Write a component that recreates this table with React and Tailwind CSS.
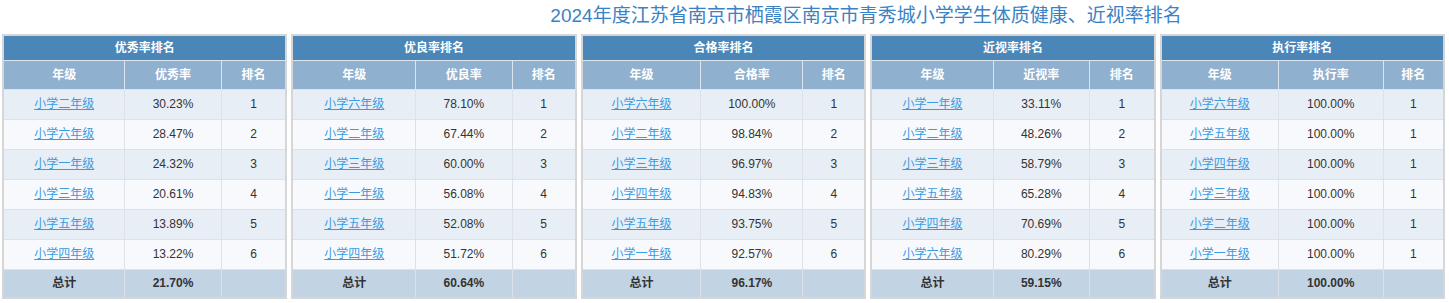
import React from "react";

const TABLES = [
    {
        title: "优秀率排名",
        col: "优秀率",
        widths: ["43%", "34%", "23%"],
        rows: [
            ["小学二年级", "30.23%", 1],
            ["小学六年级", "28.47%", 2],
            ["小学一年级", "24.32%", 3],
            ["小学三年级", "20.61%", 4],
            ["小学五年级", "13.89%", 5],
            ["小学四年级", "13.22%", 6],
        ],
        total: "21.70%",
    },
    {
        title: "优良率排名",
        col: "优良率",
        widths: ["43.5%", "34%", "22.5%"],
        rows: [
            ["小学六年级", "78.10%", 1],
            ["小学二年级", "67.44%", 2],
            ["小学三年级", "60.00%", 3],
            ["小学一年级", "56.08%", 4],
            ["小学五年级", "52.08%", 5],
            ["小学四年级", "51.72%", 6],
        ],
        total: "60.64%",
    },
    {
        title: "合格率排名",
        col: "合格率",
        widths: ["42%", "36%", "22%"],
        rows: [
            ["小学六年级", "100.00%", 1],
            ["小学二年级", "98.84%", 2],
            ["小学三年级", "96.97%", 3],
            ["小学四年级", "94.83%", 4],
            ["小学五年级", "93.75%", 5],
            ["小学一年级", "92.57%", 6],
        ],
        total: "96.17%",
    },
    {
        title: "近视率排名",
        col: "近视率",
        widths: ["43%", "34%", "23%"],
        rows: [
            ["小学一年级", "33.11%", 1],
            ["小学二年级", "48.26%", 2],
            ["小学三年级", "58.79%", 3],
            ["小学五年级", "65.28%", 4],
            ["小学四年级", "70.69%", 5],
            ["小学六年级", "80.29%", 6],
        ],
        total: "59.15%",
    },
    {
        title: "执行率排名",
        col: "执行率",
        widths: ["41.5%", "37%", "21.5%"],
        rows: [
            ["小学六年级", "100.00%", 1],
            ["小学五年级", "100.00%", 1],
            ["小学四年级", "100.00%", 1],
            ["小学三年级", "100.00%", 1],
            ["小学二年级", "100.00%", 1],
            ["小学一年级", "100.00%", 1],
        ],
        total: "100.00%",
    },
];

// one ranking table
function RankTable({ title, col, widths, rows, total }) {
    const head = "border border-[#dbe5ef] text-white font-bold";
    const cell = "border border-[#dde2e8] text-center";
    return (
        <table className="w-full table-fixed border-collapse border-2 border-[#d6d6d6] text-[12px] text-[#333]">
            <colgroup>
                {widths.map((w, i) => <col key={i} style={{ width: w }} />)}
            </colgroup>
            <thead>
                <tr className="h-[25px] bg-[#4a86b8]">
                    <th colSpan={3} className={head}>{title}</th>
                </tr>
                <tr className="h-[29px] bg-[#8fb0cf]">
                    <th className={head}>年级</th>
                    <th className={head}>{col}</th>
                    <th className={head}>排名</th>
                </tr>
            </thead>
            <tbody>
                {rows.map((r, i) => (
                    <tr key={i} className={"h-[30px] " + (i % 2 === 0 ? "bg-[#e8eef6]" : "bg-[#f8f9fd]")}>
                        <td className={cell}>
                            <a href="#" className="text-[#3a9be0] underline">{r[0]}</a>
                        </td>
                        <td className={cell}>{r[1]}</td>
                        <td className={cell}>{r[2]}</td>
                    </tr>
                ))}
                <tr className="h-[29px] bg-[#c2d4e3] font-bold">
                    <td className={cell}>总计</td>
                    <td className={cell}>{total}</td>
                    <td className={cell}></td>
                </tr>
            </tbody>
        </table>
    );
}

export default function App() {
    return (
        <div className="w-[1449px] h-[303px] bg-white font-['Liberation_Sans','Noto_Sans_CJK_SC',sans-serif]">
            <h1 className="h-[34px] pl-[283px] pt-[3px] text-center text-[19px] leading-[26px] font-normal text-[#3a82c4]">
                2024年度江苏省南京市栖霞区南京市青秀城小学学生体质健康、近视率排名
            </h1>
            <div className="flex gap-[4px] pl-[2px] pr-[4px]">
                {TABLES.map((t, i) => (
                    <div key={i} className="flex-1 min-w-0">
                        <RankTable {...t} />
                    </div>
                ))}
            </div>
        </div>
    );
}
